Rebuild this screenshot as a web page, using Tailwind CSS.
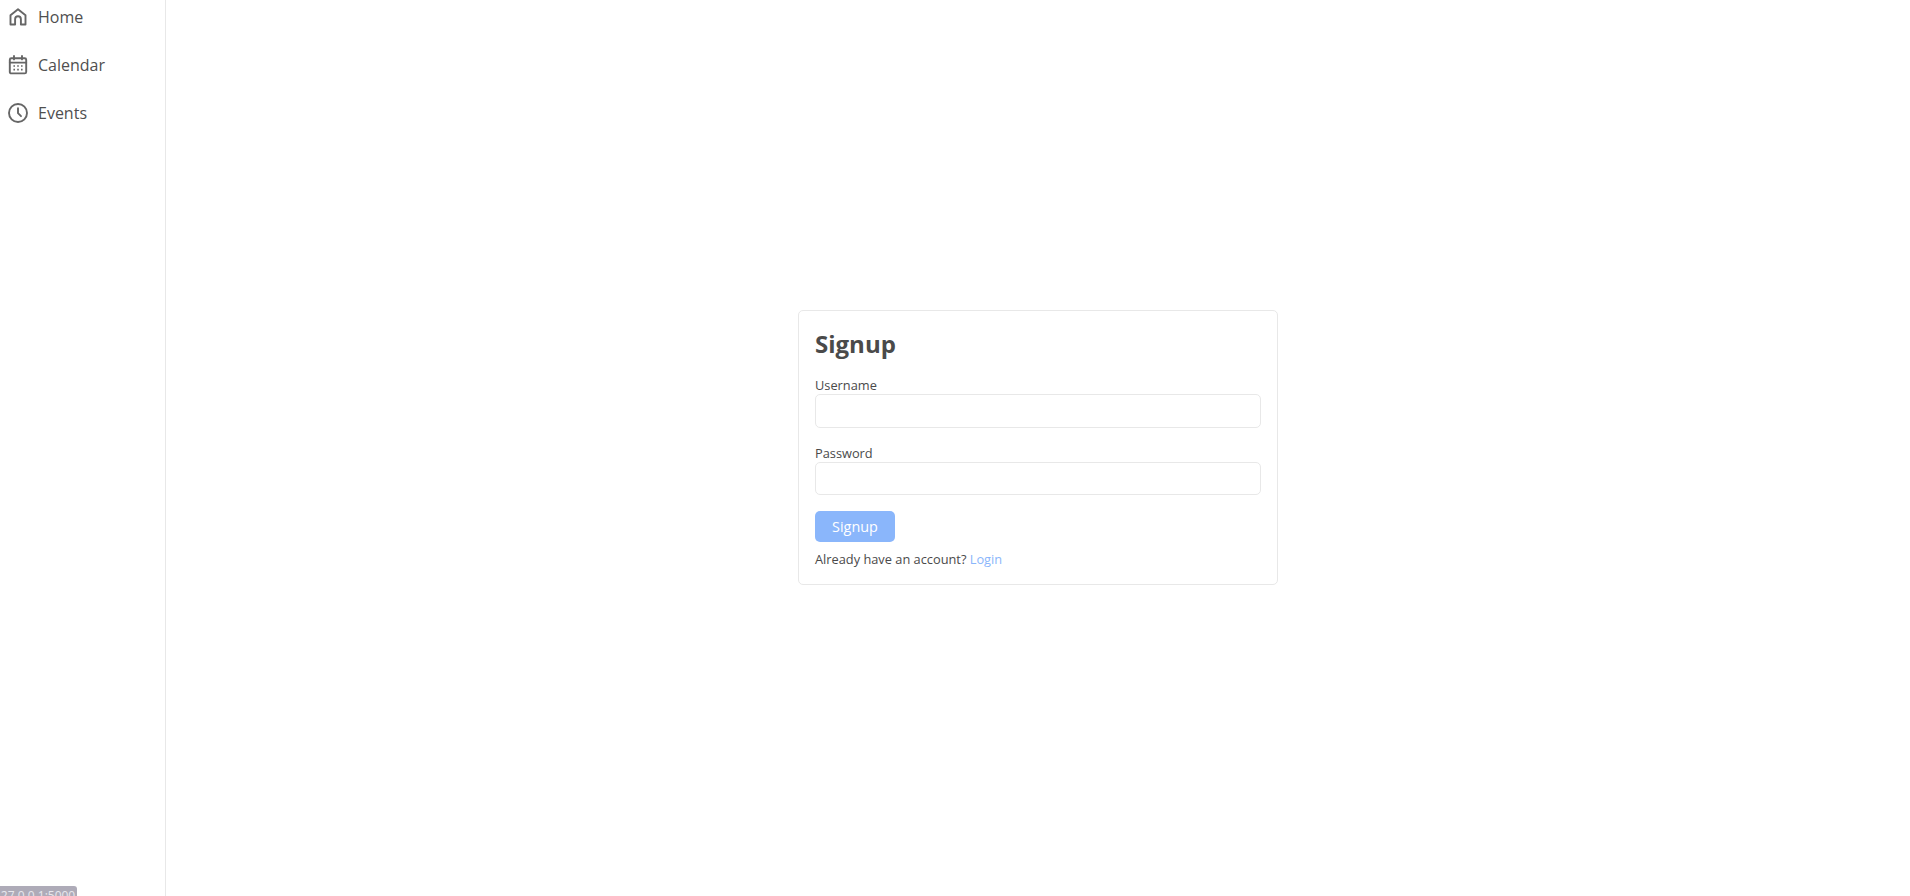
<!DOCTYPE html>
<html lang="en">
<head>
    <meta charset="UTF-8">
    <meta name="viewport" content="width=device-width, initial-scale=1.0">
    <title>Signup</title>
    <script src="https://cdn.jsdelivr.net/npm/@tailwindcss/browser@4"></script>
</head>
<body class="bg-white overflow-hidden font-['Open_Sans',sans-serif] text-[#4a4a4a]">

<div class="flex h-[896px] relative overflow-hidden">
    <!-- sidebar -->
    <nav class="w-[166px] shrink-0 border-r border-[#e8e8e8] pl-[8px] text-[16px] text-[#4f4f4f]">
        <a href="#" class="flex items-center gap-[10px] h-[48px] -mt-[7px]">
            <svg class="w-5 h-5 text-[#666]" viewBox="0 0 20 20" fill="none" stroke="currentColor" stroke-width="1.9" stroke-linejoin="round" stroke-linecap="round">
                <path d="M2.5 17.5V8.2L10 2.2l7.5 6v9.3h-4.6v-5.3a2.9 2.9 0 0 0-5.8 0v5.3z"/>
            </svg>
            <span>Home</span>
        </a>
        <a href="#" class="flex items-center gap-[10px] h-[48px]">
            <svg class="w-5 h-5 text-[#666]" viewBox="0 0 20 20" fill="none" stroke="currentColor" stroke-width="1.9" stroke-linecap="round">
                <rect x="1.8" y="3.2" width="16.4" height="15.2" rx="1.5"/>
                <path d="M1.8 7.6h16.4M6 1v3.4M14 1v3.4"/>
                <path stroke-width="1.6" stroke-dasharray="1.6 2.2" stroke-linecap="butt" d="M5.4 11h10M5.4 14.6h10"/>
            </svg>
            <span>Calendar</span>
        </a>
        <a href="#" class="flex items-center gap-[10px] h-[48px]">
            <svg class="w-5 h-5 text-[#666]" viewBox="0 0 20 20" fill="none" stroke="currentColor" stroke-width="1.9" stroke-linecap="round" stroke-linejoin="round">
                <circle cx="10" cy="10" r="9"/>
                <path d="M10 5.2v5l3 3"/>
            </svg>
            <span>Events</span>
        </a>
    </nav>

    <!-- main -->
    <main class="flex-1 flex items-center justify-center pb-[1px]">
        <div class="w-[480px] h-[275px] border border-[#e8e8e8] rounded-[5px] px-4 pt-[17px]">
            <h1 class="text-[24px] leading-[32px] font-bold text-[#4a4a4a]">Signup</h1>
            <form>
                <label class="block text-[12.8px] leading-[18px] mt-[16px] text-[#4a4a4a]">Username</label>
                <input type="text" class="block w-full h-[34px] border border-[#e8e8e8] rounded-[5px]">
                <label class="block text-[12.8px] leading-[18px] mt-[16px] text-[#4a4a4a]">Password</label>
                <input type="password" class="block w-full h-[33px] border border-[#e8e8e8] rounded-[5px]">
                <button type="button" class="block w-[80px] h-[31px] mt-[16px] bg-[#8ab6fb] text-white text-[14.4px] rounded-[5px]">Signup</button>
                <p class="text-[12.8px] leading-[18px] mt-[8px] text-[#4a4a4a]">Already have an account? <a href="#" class="text-[#8ab6fb]">Login</a></p>
            </form>
        </div>
    </main>

    <!-- status url -->
    <div class="absolute left-0 top-[886px] w-[77px] h-[20px] bg-[#aeabb8] rounded-tr-[3px] overflow-hidden text-[12px] leading-[20px] text-[#e8e8ee] whitespace-nowrap">
        <span class="block -ml-[6px]">127.0.0.1:5000</span>
    </div>
</div>

</body>
</html>
